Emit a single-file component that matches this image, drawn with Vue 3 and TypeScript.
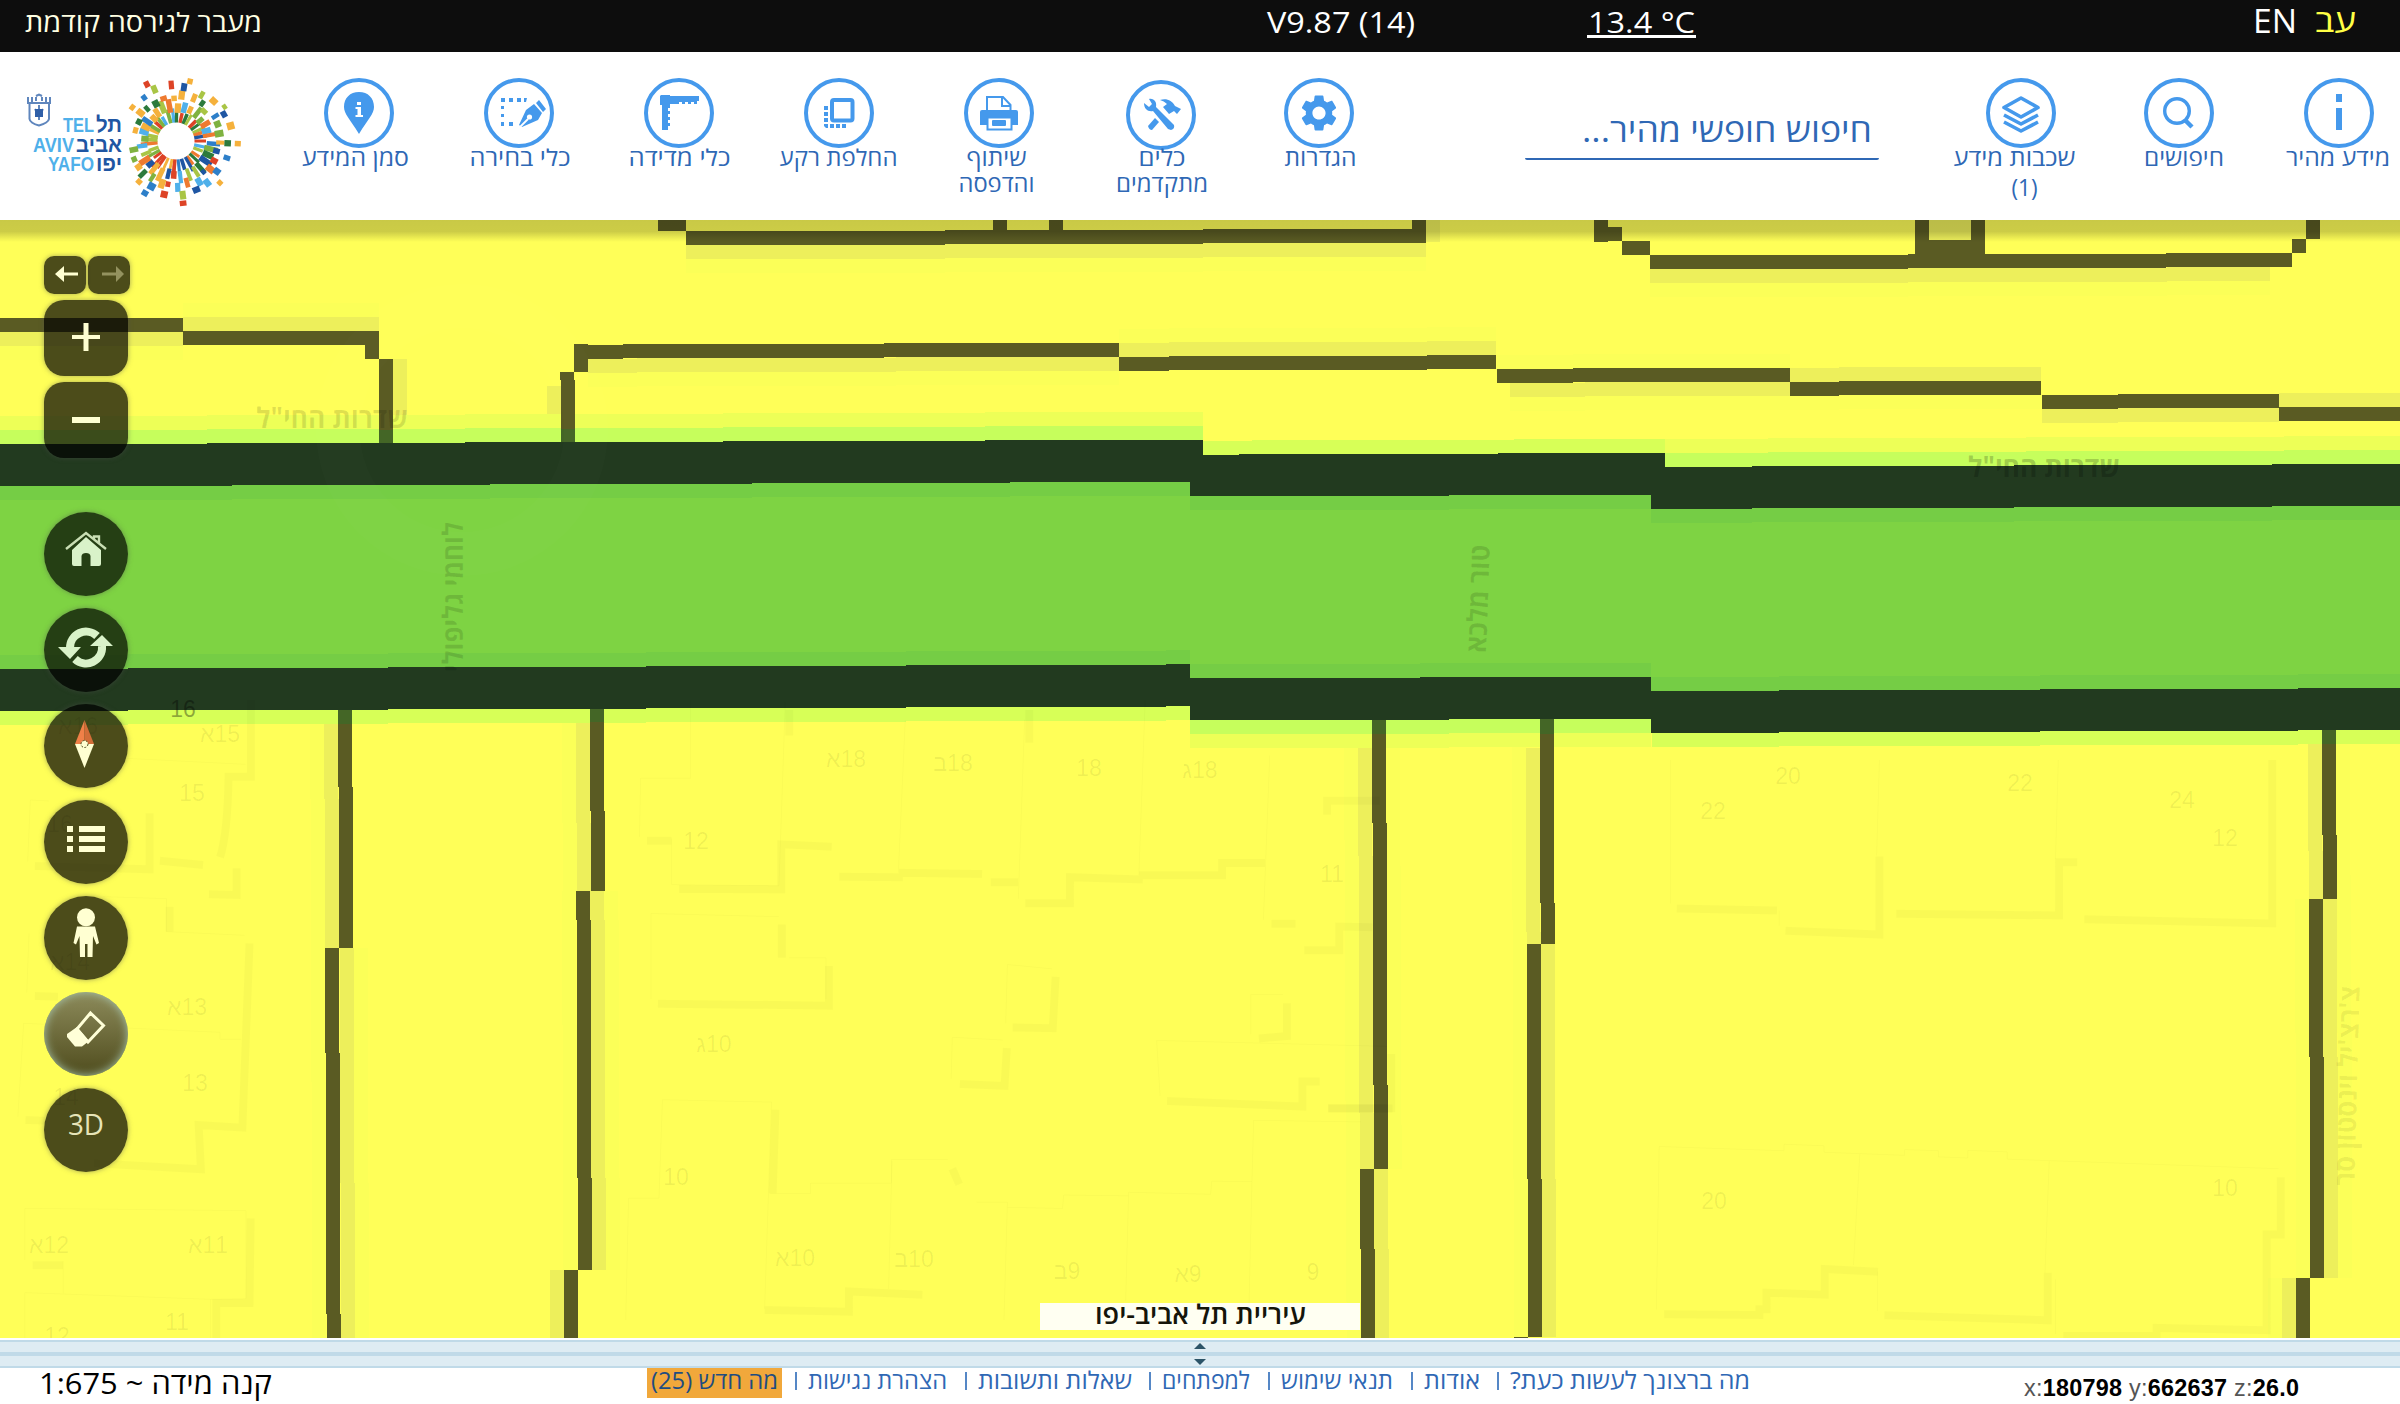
<script setup lang="ts">
import { defineComponent, h } from 'vue'

type Label = { t: string; x: number; w: number }
type Tool = { icon: string; dy?: number; lines: Label[] }

/* A single line of text condensed to a fixed width, like the site's narrow display face. */
const Fit = defineComponent({
  props: {
    t: { type: String, required: true },
    w: { type: Number, required: true },
    s: { type: Number, default: 22 },
    b: { type: Number, default: 0 },
  },
  setup(p) {
    return () =>
      h('svg', { width: p.w, height: p.b + 8, class: 'fit', overflow: 'visible', style: { display: 'block' } }, [
        h(
          'text',
          {
            x: p.w / 2,
            y: p.b,
            'text-anchor': 'middle',
            'font-size': p.s,
            textLength: p.w,
            lengthAdjust: 'spacingAndGlyphs',
            fill: 'currentColor',
            direction: /[\u0590-\u05ff]/.test(p.t) ? 'rtl' : 'ltr',
          },
          p.t,
        ),
      ])
  },
})

const tools: Tool[] = [
  { icon: 'pin', lines: [{ t: 'סמן המידע', x: 76.5, w: 107 }] },
  { icon: 'select', lines: [{ t: 'כלי בחירה', x: 81, w: 101 }] },
  { icon: 'ruler', lines: [{ t: 'כלי מדידה', x: 80.5, w: 102 }] },
  { icon: 'swap', lines: [{ t: 'החלפת רקע', x: 79.5, w: 118 }] },
  { icon: 'print', lines: [{ t: 'שיתוף', x: 77.5, w: 60 }, { t: 'והדפסה', x: 77.5, w: 76 }] },
  { icon: 'build', dy: 2, lines: [{ t: 'כלים', x: 83, w: 47 }, { t: 'מתקדמים', x: 83, w: 92 }] },
  { icon: 'gear', lines: [{ t: 'הגדרות', x: 81.5, w: 72 }] },
]
const infoTools: Tool[] = [
  { icon: 'layers', lines: [{ t: 'שכבות מידע', x: 72.5, w: 122 }, { t: '(1)', x: 82.5, w: 26 }] },
  { icon: 'search', lines: [{ t: 'חיפושים', x: 84, w: 80 }] },
  { icon: 'info', lines: [{ t: 'מידע מהיר', x: 79, w: 104 }] },
]

const links = [
  { t: 'הצהרת נגישות', w: 139 },
  { t: 'שאלות ותשובות', w: 154 },
  { t: 'למפתחים', w: 88 },
  { t: 'תנאי שימוש', w: 112 },
  { t: 'אודות', w: 56 },
  { t: 'מה ברצונך לעשות כעת?', w: 240 },
]

/* The raster overlay is turned a fraction of a degree: one pixel every SLOPE pixels. */
const SLOPE = 259.5
const hbar = (x1: number, x2: number, y: number, t = 14) => {
  const d = (x2 - x1) / SLOPE
  return `M${x1} ${y}L${x2} ${y - d}V${y - d + t}L${x1} ${y + t}Z`
}
const vbar = (x: number, y1: number, y2: number, t = 14) => {
  const d = (y2 - y1) / SLOPE
  return `M${x} ${y1}H${x + t}L${x + t + d} ${y2}H${x + d}Z`
}
const box = (x1: number, y1: number, x2: number, y2: number) => `M${x1} ${y1}H${x2}V${y2}H${x1}Z`

const roads = [
  hbar(0, 183, 318.4), hbar(183, 379, 331.5), box(365, 345, 379, 359), box(379, 359, 393, 446),
  box(574, 344, 588, 372), hbar(574, 1119, 344.7), box(560, 372, 574, 380), box(561, 380, 575, 446),
  hbar(1119, 1496, 356.7), hbar(1497, 1790, 368.8), hbar(1790, 2041, 381.7), hbar(2042, 2279, 394.8), hbar(2279, 2400, 407.4),
  box(658, 218, 686, 231), hbar(686, 1426, 231.5), box(1412, 218, 1426, 242), box(993, 218, 1007, 232), box(1049, 218, 1063, 232),
  box(1594, 218, 1608, 242), box(1608, 227, 1622, 241), box(1622, 241, 1650, 255), hbar(1650, 2292, 255.5),
  box(1915, 218, 1929, 256), box(1971, 218, 1985, 256), box(1929, 240, 1971, 256),
  box(2292, 239, 2306, 253), box(2306, 218, 2320, 239),
  vbar(338.2, 706, 948), vbar(325.1, 948, 1340), vbar(590.1, 704, 891), vbar(576.4, 891, 1270), vbar(564.2, 1270, 1340),
  vbar(1372.1, 718, 1169), vbar(1360.2, 1169, 1340), vbar(1539.8, 718, 944), vbar(1526.6, 944, 1337), box(1514, 1337, 1528, 1340),
  vbar(2322.1, 728, 899), vbar(2308.9, 899, 1278), vbar(2296, 1278, 1340),
].join('')

const roadHalos = [
  hbar(0, 183, 332.4), hbar(183, 379, 317.5), box(393, 359, 407, 432), box(547, 386, 561, 432), hbar(588, 1119, 358.7),
  hbar(1119, 1496, 342.7), hbar(1510, 1790, 382.8), hbar(1790, 2041, 367.7), hbar(2042, 2279, 408.8), hbar(2279, 2400, 393.4),
  hbar(686, 1426, 245.5), box(1426, 218, 1440, 242), hbar(1650, 2270, 269.5), box(1929, 218, 1971, 240),
  vbar(324.2, 720, 948), vbar(339.6, 948, 1340), vbar(576.1, 718, 891), vbar(590.4, 891, 1270), vbar(550.2, 1270, 1340),
  vbar(1358.1, 748, 1169), vbar(1374.2, 1169, 1340), vbar(1525.8, 748, 944), vbar(1540.6, 944, 1337),
  vbar(2308.1, 744, 899), vbar(2322.9, 899, 1278), vbar(2282, 1278, 1340),
].join('')
const softHalos = [
  hbar(0, 183, 346.4), hbar(183, 379, 303.5), hbar(588, 1119, 372.7), hbar(1119, 1496, 328.7), hbar(1510, 1790, 396.8),
  hbar(1790, 2041, 395.7), hbar(686, 1426, 259.5), hbar(1650, 2270, 283.5), hbar(1497, 1790, 354.8),
  vbar(310.2, 720, 948), vbar(353.6, 948, 1340), vbar(311, 948, 1340), vbar(562.1, 718, 891), vbar(604.4, 891, 1270), vbar(562, 891, 1270),
  vbar(1344.1, 734, 1169), vbar(1386, 734, 1169), vbar(1346, 1169, 1340), vbar(1511.8, 734, 944), vbar(1512.6, 944, 1337),
  vbar(2336, 744, 899), vbar(2295, 899, 1278), vbar(2337, 899, 1278), vbar(2268, 1278, 1340),
].join('')

/* Park strip: top and bottom dark borders in three stepped segments. */
const seg = (x1: number, x2: number, y1: number, y2: number) => hbar(x1, x2, y1, y2 - y1)
const parkFill = [seg(0, 1190, 470, 690), seg(1190, 1651, 480, 700), seg(1651, 2400, 492, 712)].join('')
const parkDark = [
  seg(0, 1203, 444.3, 486.4), seg(1190, 1665, 454.7, 496.5), seg(1651, 2400, 466.9, 508.9),
  seg(0, 1190, 669, 711), seg(1190, 1651, 678.4, 720.5), seg(1651, 2400, 691, 733),
].join('')
const parkInner = [
  seg(0, 1190, 486.4, 500.4), seg(1190, 1651, 496.5, 510.5), seg(1651, 2400, 508.9, 522.9),
  seg(0, 1190, 655, 669), seg(1190, 1651, 664.4, 678.4), seg(1651, 2400, 677, 691),
].join('')
const lime = [seg(0, 1203, 430.3, 444.3), seg(1665, 2400, 452.9, 466.9), seg(1190, 1651, 720.5, 734.5)].join('')
const limeMid = [seg(1203, 1665, 440.7, 454.7), seg(0, 1190, 711, 725), seg(1652, 2400, 733, 747)].join('')
const limeSoft = [seg(0, 1203, 416.3, 430.3), seg(1665, 2400, 438.9, 452.9), seg(1190, 1651, 734.5, 748.5)].join('')

const houses: [string, number, number][] = [
  ['15א', 220, 742], ['15', 192, 801], ['13א', 187, 1015], ['13', 195, 1091], ['16א', 78, 734], ['16', 60, 832],
  ['14א', 70, 970], ['14', 66, 1105], ['12א', 49, 1253], ['11א', 208, 1253], ['11', 177, 1330], ['12', 57, 1344],
  ['12', 696, 849], ['18א', 846, 767], ['18ב', 953, 771], ['18', 1089, 776], ['18ג', 1200, 778], ['11', 1332, 882],
  ['10ג', 714, 1052], ['10', 676, 1185], ['10א', 795, 1266], ['10ב', 914, 1267], ['9ב', 1067, 1279], ['9א', 1188, 1282], ['9', 1313, 1280],
  ['20', 1788, 784], ['22', 2020, 791], ['22', 1713, 819], ['24', 2182, 808], ['12', 2225, 846], ['20', 1714, 1209], ['10', 2225, 1196],
]
const houseLabel = (s: string) => (/[א-ת]$/.test(s) ? '\u202d' + s.slice(-1) + s.slice(0, -1) + '\u202c' : s)

/* Confetti burst of the city emblem. */
const palette = ['#1f56a3', '#2d7fc9', '#4fb0ea', '#2c7a3c', '#7fb241', '#a9c545', '#f5b13c', '#ee7a30', '#dd4326', '#f5b13c']
let seedValue = 11
const rnd = () => {
  seedValue = (seedValue * 16807) % 2147483647
  return seedValue / 2147483647
}
const confetti: { a: number; r: number; l: number; w: number; c: string }[] = []
const ring = (n: number, r: number, dr: number, l: number, dl: number, w: number, dw: number) => {
  for (let i = 0; i < n; i++) {
    const p = { a: (i * 360) / n + rnd() * 5, r: r + rnd() * dr, l: l + rnd() * dl, w: w + rnd() * dw, c: palette[Math.floor(rnd() * 10)] }
    /* the wordmark sits to the left, so nothing may fly past it */
    if (Math.cos((p.a * Math.PI) / 180) * (p.r + p.l) < -50) continue
    confetti.push(p)
  }
}
ring(36, 18.5, 0, 9, 8, 2.8, 1)
ring(32, 27, 4, 7, 7, 3.8, 2.5)
ring(30, 38, 5, 5, 5, 4, 3)
ring(22, 47, 6, 5, 4, 4.5, 3.5)
ring(9, 57, 4, 4, 3, 4.5, 2.5)
</script>

<template>
  <div class="page">
    <div class="topbar">
      <Fit class="prev" t="מעבר לגירסה קודמת" :w="237" :s="26" :b="31.5" />
      <Fit class="ver" t="V9.87 (14)" :w="148" :s="29.5" :b="33" />
      <span class="temp"><Fit t="13.4 °C" :w="107" :s="29.5" :b="33" /></span>
      <Fit class="en" t="EN" :w="44" :s="33" :b="33" />
      <Fit class="he" t="עב" :w="41" :s="32" :b="31.5" />
    </div>

    <header class="header">
      <svg class="logo" width="279" height="168" viewBox="0 52 279 168">
        <g fill="none" stroke="#5f86bd" stroke-width="2">
          <path d="M28 97V103H50V97M32 97V102M36 97V101M42 97V101M46 97V102M36 96L39 94.500 42 96" />
          <path d="M29.500 104V119Q30 123 39 125.500Q48 123 49 119V104" />
          <path d="M39 105V120M35 109L39 116 43 109M35 115H43" />
        </g>
        <path d="M35 109H43V117H35Z" fill="#2f5fa8" />
        <g transform="translate(176 141)">
          <rect v-for="(p, i) in confetti" :key="i" :x="p.r" :y="-p.w / 2" :width="p.l" :height="p.w" :fill="p.c" :transform="`rotate(${p.a})`" />
        </g>
        <g class="logo-text">
          <text x="63" y="131.500" textLength="31" lengthAdjust="spacingAndGlyphs">TEL</text>
          <text x="33" y="151.500" textLength="41" lengthAdjust="spacingAndGlyphs">AVIV</text>
          <text x="48" y="171" textLength="46" lengthAdjust="spacingAndGlyphs">YAFO</text>
        </g>
        <g class="logo-text he-logo">
          <text x="96" y="131.500" textLength="26" lengthAdjust="spacingAndGlyphs">תל</text>
          <text x="76" y="151.500" textLength="46" lengthAdjust="spacingAndGlyphs">אביב</text>
          <text x="96" y="171" textLength="26" lengthAdjust="spacingAndGlyphs">יפו</text>
        </g>
      </svg>

      <template v-for="(group, g) in [tools, infoTools]" :key="g">
        <div v-if="g === 1" class="search">
          <div class="field"><Fit t="חיפוש חופשי מהיר..." :w="290" :s="32.5" :b="39.5" /></div>
        </div>
        <nav :class="g ? 'group info-group' : 'group'">
          <div v-for="tool in group" :key="tool.icon" class="tool">
            <svg class="ring" :class="{ low: tool.dy }" width="70" height="70" viewBox="0 0 70 70">
              <circle cx="35" cy="35" r="33" fill="#fff" stroke="#4599ec" stroke-width="4" />
              <g v-if="tool.icon === 'pin'">
                <path d="M35 14C26 14 20 20 20 29C20 36 26 41 35 56C44 41 50 36 50 29C50 20 44 14 35 14Z" fill="#4599ec" />
                <path d="M33 24H37V27H33ZM31.500 29H37V37H39V39H31.500V37H33.500V31H31.500Z" fill="#fff" />
              </g>
              <g v-else-if="tool.icon === 'select'" fill="#4599ec">
                <path d="M17 20H21V24H17ZM25 20H29V24H25ZM33 20H37V24H33ZM40 20H43L42 24H40ZM17 28H20V31H17ZM17 36H20V39H17ZM17 44H20V48H17ZM25 44H29V48H25Z" />
                <path d="M52 25L55 22L62 31L59 34ZM50 26L58 35L54 42L38 49L35 47L42 32Z" />
                <path d="M36 49L44 41" stroke="#fff" stroke-width="1.800" /><circle cx="45.500" cy="39" r="2.600" fill="#fff" />
              </g>
              <g v-else-if="tool.icon === 'ruler'" fill="#4599ec">
                <path d="M17 17H26V18H55V23H53V26H50V24H47V26H44V24H41V26H38V24H35V26H26V30H24V33H26V36H24V39H26V42H24V45H26V48H24V52H18V27H16V18Z" />
              </g>
              <g v-else-if="tool.icon === 'swap'" fill="#4599ec">
                <rect x="28" y="22" width="20.500" height="20.500" rx="2" fill="none" stroke="#4599ec" stroke-width="4" />
                <path d="M20 28H24V32H20ZM20 34H24V38H20ZM20 40H24V44H20ZM20 46H24V50H22L20 48ZM26 46H30V50H26ZM32 46H36V50H32ZM38 46H42V50H38Z" />
              </g>
              <g v-else-if="tool.icon === 'print'" fill="#4599ec">
                <path d="M23 33V19H39L46.500 27V33" fill="#fff" stroke="#4599ec" stroke-width="2" /><path d="M38 19V28H47" fill="none" stroke="#4599ec" stroke-width="2" />
                <path d="M18 32H52Q54 32 54 34V47H16V34Q16 32 18 32Z" /><rect x="23.500" y="39.500" width="24" height="12" fill="#fff" stroke="#4599ec" stroke-width="2" />
                <path d="M16 34H54V42H49V38H22V42H16Z" /><rect x="28" y="42" width="14" height="6" rx="1" />
              </g>
              <g v-else-if="tool.icon === 'build'" fill="#4599ec">
                <path d="M18 23L23 27L26 24L23 19C28 18 31 22 30 27L48 45Q49 49 45 50L42 49L27 31C22 32 18 29 18 23Z" />
                <path d="M34 20C40 18 46 20 49 26L53 28L55 29L51 34L48 31L43 34L37 27L41 24Q38 21 34 20Z" />
                <path d="M29 38L33 42L26 50Q23 50 22 46Z" />
              </g>
              <path v-else-if="tool.icon === 'gear'" fill="#4599ec" transform="translate(13 13) scale(1.833)" d="M19.140 12.940c.04-.3.060-.61.060-.94 0-.32-.02-.64-.07-.94l2.030-1.580c.18-.14.23-.41.120-.61l-1.920-3.320c-.12-.22-.37-.29-.59-.22l-2.390.96c-.5-.38-1.030-.7-1.620-.94l-.36-2.540c-.04-.24-.24-.41-.48-.41h-3.840c-.24 0-.43.17-.47.41l-.36 2.540c-.59.24-1.130.57-1.620.94l-2.390-.96c-.22-.08-.47 0-.59.22L2.740 8.870c-.12.21-.08.470.120.610l2.030 1.580c-.05.3-.09.630-.09.940s.020.640.070.940l-2.030 1.580c-.18.140-.23.410-.12.610l1.920 3.320c.12.220.370.290.590.220l2.390-.96c.5.380 1.030.7 1.620.940l.36 2.540c.05.240.240.410.480.410h3.840c.24 0 .44-.17.470-.41l.36-2.540c.59-.24 1.130-.56 1.620-.94l2.390.96c.22.080.470 0 .59-.22l1.920-3.320c.12-.22.070-.47-.12-.61l-2.010-1.580zM12 15.600c-1.980 0-3.600-1.620-3.600-3.600s1.620-3.600 3.600-3.600 3.600 1.620 3.600 3.600-1.620 3.600-3.600 3.600z" />
              <g v-else-if="tool.icon === 'layers'" fill="none" stroke="#4599ec" stroke-width="3.600" stroke-linejoin="round">
                <path d="M35 20L52 29.500L35 39L18 29.500ZM18 37L35 46L52 37M18 44L35 53L52 44" />
              </g>
              <g v-else-if="tool.icon === 'search'" fill="none" stroke="#4599ec" stroke-width="3.400">
                <circle cx="33" cy="33" r="12.300" /><path d="M41 42L48 49" stroke-width="4.500" />
              </g>
              <path v-else d="M32 16H38V24H32ZM32 30H38V52H32Z" fill="#4599ec" />
            </svg>
            <svg class="labels" width="160" height="56">
              <text
                v-for="(l, i) in tool.lines"
                :key="l.t"
                :x="l.x"
                :y="17.5 + i * (l.t === '(1)' ? 30 : 26)"
                :textLength="l.w"
                lengthAdjust="spacingAndGlyphs"
                text-anchor="middle"
                direction="rtl"
              >{{ l.t }}</text>
            </svg>
          </div>
        </nav>
      </template>
    </header>

    <main class="map">
      <svg class="canvas" width="2400" height="1118" viewBox="0 220 2400 1118">
        <g shape-rendering="crispEdges">
          <path :d="softHalos" fill="#fbff58" />
          <path :d="roadHalos" fill="#edef5b" />
          <path :d="limeSoft" fill="#edff57" />
          <path :d="limeMid" fill="#d7ff57" />
          <path :d="lime" fill="#c6fe5c" />
          <path :d="roads" fill="#5a5b23" />
          <path d="M379 430H393V446H379ZM561 429H575V446H561ZM338 708H352V724H338ZM590 706H604V722H590ZM1372 718H1386V734H1372ZM1540 718H1554V734H1540ZM2322 728H2336V744H2322Z" fill="#446626" />
          <path :d="parkFill" fill="#7ed343" />
          <path :d="parkInner" fill="#75cd45" />
          <path :d="parkDark" fill="#223a1f" />
        </g>
        <circle cx="462" cy="430" r="124" fill="none" stroke="#fff" stroke-opacity=".012" stroke-width="44" />
        <g class="shade">
          <path transform="translate(500 700) scale(.574 .3954)" d="M256 356H299M312 478L490 479V365L578 371M591 447L702 448M695 437L840 440M855 461H903M915 514H993V448L1120 454M1113 443H1258V412H1333M1344 566H1386M1401 633H1462V573L1520 575M275 768L573 773V673M491 568V652M893 828L963 830L968 700M801 971L879 976L883 880M1322 856L1371 850V767M1162 1014L1398 1028V965H1428M1443 1033H1555M1441 290V255H1533M480 1036L475 1248M461 1543L608 1547V1496L736 1504M788 1185L800 1225M504 25V90M922 25V108" />
          <path transform="translate(1300 760) scale(.7015 .3827)" d="M537 388L680 393M692 446L826 456V252M850 402L1082 406V267H1108M1118 416L1386 427V0M519 1448L655 1450V1435H665V1392L748 1397V1330L824 1337M833 1451L1066 1464V1340M1088 1505H1221V1484L1378 1490V1240H1398V1090M40 910H130V768" />
          <path transform="translate(0 700) scale(.4464 .3333)" d="M78 498L335 508V340M493 472Q510 400 512 230H562V0M468 583L530 585V505M358 482L455 495M380 620V695M559 730L543 1283L445 1275L450 1408L210 1390M78 888L130 890M57 1260L100 1262" />
          <path transform="translate(0 1180) scale(.3827 .3333)" d="M85 256H165M655 115L652 369H565V474" />
        </g>
        <g class="outline">
          <path transform="translate(500 700) scale(.574 .3954)" d="M332 0V198H245L243 347M299 350V467L486 470L497 5M694 437L706 50M903 503L914 50M1113 443L1124 0M1330 556L1341 140M263 757V540L486 548M503 652H568V757M881 818L884 669L962 680M786 958L788 853L876 860M1308 846V745H1364M1150 1002L1144 861L1545 876M219 1568L224 1260H277L283 1011L473 1017L461 1540M470 1248H541V1222H682V1162H780M677 1490L683 1165M830 1270H884L878 1568M884 1283L980 1286L982 1252L1095 1254V1245L1238 1250L1240 1217L1310 1218L1313 1063L1500 1067M1095 1254L1090 1520M1310 1218L1305 1525" />
          <path transform="translate(1300 760) scale(.7015 .3827)" d="M528 375V0M683 433V393M822 250L826 0M1077 258L1081 0M508 1436L512 1010L690 1021V1004L747 1008V1025L862 1033V1018L910 1021V1037L952 1040V1020L1008 1024V1043L1395 1068M798 1030L789 1320M1068 1048L1062 1340M823 1440V1337M1077 1500V1357" />
          <path transform="translate(0 700) scale(.4464 .3333)" d="M62 485L68 300L110 303M60 878L65 700M230 590L373 596V695L548 706M40 1250L53 970L493 997V1018H540M280 175L550 193" />
          <path transform="translate(0 1180) scale(.3827 .3333)" d="M65 240V85L643 92V356L550 358V474M165 243V340M65 474V338L550 358" />
        </g>
        <g class="house">
          <text v-for="(n, i) in houses" :key="i" :x="n[1]" :y="n[2]">{{ houseLabel(n[0]) }}</text>
          <text x="183" y="717" fill-opacity=".35">16</text>
        </g>
        <g class="street">
          <text x="332" y="428" textLength="152" lengthAdjust="spacingAndGlyphs">שדרות החי"ל</text>
          <text x="2044" y="477" textLength="152" lengthAdjust="spacingAndGlyphs" fill-opacity=".2">שדרות החי"ל</text>
          <text transform="translate(463 597) rotate(-90)" textLength="150" lengthAdjust="spacingAndGlyphs">לוחמי גליפולי</text>
          <text transform="translate(1488 599) rotate(-88)" textLength="108" lengthAdjust="spacingAndGlyphs">טור מלכא</text>
          <text class="pale" transform="translate(2357 1086) rotate(-88.500)" textLength="200" lengthAdjust="spacingAndGlyphs">צ'רצ'יל וינסטון סר</text>
        </g>
      </svg>
      <div class="edge"></div>

      <div class="controls">
        <div class="history">
          <button class="btn small"><svg width="42" height="38"><path d="M11 18L20 10V16.500H34V19.500H20V26Z" fill="#ffffd2" /></svg></button>
          <button class="btn small"><svg width="42" height="38"><path d="M36 18L28 10V16.500H14V19.500H28V26Z" fill="#93925f" /></svg></button>
        </div>
        <button class="btn zoom"><svg width="84" height="76"><path d="M28 35H39.500V23H44.500V35H56V39H44.500V51H39.500V39H28Z" fill="#ffffd2" /></svg></button>
        <button class="btn zoom"><svg width="84" height="76"><path d="M28 35H56V41H28Z" fill="#ffffd2" /></svg></button>
        <div class="rounds">
          <button class="btn round"><svg width="84" height="84">
            <path d="M22 37L42 21L62 37M50 27V24.500H55V31" fill="none" stroke="#c9deb4" stroke-width="2.400" /><path d="M42 25L57 38V52Q57 54 55 54H46.500V44Q46 41 42 41Q38 41 37.500 44V54H30Q28 54 28 52V38Z" fill="#d9f2c9" />
          </svg></button>
          <button class="btn round"><svg width="84" height="84">
            <g fill="none" stroke="#d9f2c9" stroke-width="8"><path d="M26 40A16 16 0 0 1 53 28" /><path d="M58 38A16 16 0 0 1 31 51" /></g>
            <path d="M14 39H37L26 51ZM46 38H69L58 27Z" fill="#d9f2c9" />
          </svg></button>
          <button class="btn round"><svg width="84" height="84">
            <path d="M40.500 16L31 40H40.500Z" fill="#f08048" /><path d="M40.500 16L50 40H40.500Z" fill="#d26d38" /><path d="M31 40H50L40.500 64Z" fill="#ffffd2" /><circle cx="40.500" cy="40" r="3.500" fill="#ffffd2" stroke="#4c4a1a" stroke-dasharray="2 1.500" />
          </svg></button>
          <button class="btn round"><svg width="84" height="84"><path d="M23 26H29V32H23ZM35 26H61V32H35ZM23 36H29V42H23ZM35 36H61V42H35ZM23 46H29V52H23ZM35 46H61V52H35Z" fill="#ffffd2" /></svg></button>
          <button class="btn round"><svg width="84" height="84">
            <circle cx="42" cy="21.300" r="9" fill="#ffffd2" /><path d="M33 30.500H51L55 47L52.500 48.500L49 40L48.500 61H43.500V48H41V61H36L35.500 40L32 48.500L29.500 47Z" fill="#ffffd2" />
          </svg></button>
          <button class="btn round off"><svg width="84" height="84">
            <path d="M46.500 21L59.500 33.500L44 50L33 37Z" fill="none" stroke="#ffffd8" stroke-width="3" /><path d="M33 35L45 49L38 54.500H31L23 45V42Z" fill="#ffffd8" />
          </svg></button>
          <button class="btn round"><svg width="84" height="84"><text x="42" y="47" text-anchor="middle" font-size="29" textLength="36" lengthAdjust="spacingAndGlyphs" fill="#e6e4b8">3D</text></svg></button>
        </div>
      </div>

      <div class="credit"><Fit t="עיריית תל אביב-יפו" :w="211" :s="27" :b="21" /></div>
    </main>

    <div class="splitter">
      <div class="strip"><svg width="12" height="6"><path d="M6 0L12 6H0Z" fill="#2c5468" /></svg></div>
      <div class="strip second"><svg width="12" height="6"><path d="M0 0H12L6 6Z" fill="#2c5468" /></svg></div>
    </div>

    <footer class="footer">
      <Fit class="scale" t="קנה מידה ~ 1:675" :w="233" :s="29.5" :b="25.5" />
      <div class="new"><Fit t="מה חדש (25)" :w="127" :s="24" :b="20.5" /></div>
      <div class="links">
        <template v-for="l in links" :key="l.t">
          <i class="bar"></i><Fit class="link" :t="l.t" :w="l.w" :s="24" :b="20.5" />
        </template>
      </div>
      <div class="coords">x:<b>180798</b> y:<b>662637</b> z:<b>26.0</b></div>
    </footer>
  </div>
</template>

<style>
body { margin: 0; }
</style>

<style scoped>
.page { width: 2400px; height: 1404px; display: flex; flex-direction: column; overflow: hidden; background: #fff; font-family: "Open Sans", "Liberation Sans", sans-serif; }
.topbar { height: 52px; background: #0d0d0d; color: #fff; display: flex; flex: none; }
.prev { margin-left: 25px; color: #ffffe2; }
.ver { margin-left: 1005px; }
.temp { margin-left: 172px; width: 109px; height: 38px; box-sizing: border-box; border-bottom: 3px solid #fff; padding-left: 1px; }
.en { margin-left: 557px; }
.he { margin-left: 18px; color: #ffff45; }

.header { height: 168px; display: flex; flex: none; background: #fff; }
.logo-text { font: 700 20.500px "Liberation Sans", sans-serif; fill: #4fb0ea; }
.he-logo { font-size: 22px; fill: #1f56a3; }
.group { display: grid; grid-template-columns: repeat(7, 160px); }
.info-group { grid-template-columns: 158px 159px 141px; }
.tool { display: flex; flex-direction: column; padding-top: 26px; }
.ring { margin-left: 45px; flex: none; position: relative; }
.info-group .ring { margin-left: 44px; }
.info-group .tool:last-child .ring { margin-left: 45px; }
.low { top: 2px; left: 2px; }
.labels { overflow: visible; font-size: 23px; fill: #2f68b5; position: relative; }
.search { width: 543px; }
.field { margin: 50px 0 0 126px; width: 354px; height: 58px; box-sizing: border-box; border-bottom: 2px solid #2f68b5; color: #2f68b5; padding-left: 57px; border-radius: 2px; }

.map { height: 1118px; flex: none; position: relative; background: #ffff58; overflow: hidden; }
.canvas { display: block; }
.edge { position: absolute; inset: 0 0 auto 0; height: 22px; background: linear-gradient(rgba(0, 0, 0, .21), rgba(0, 0, 0, .2) 52%, rgba(0, 0, 0, .07) 82%, rgba(0, 0, 0, 0)); }
.shade path { fill: none; stroke: #000; stroke-opacity: .023; stroke-width: 8px; vector-effect: non-scaling-stroke; }
.outline path { fill: none; stroke: #000; stroke-opacity: .02; stroke-width: 1px; vector-effect: non-scaling-stroke; }
.house { font: 23px "Liberation Sans", sans-serif; text-anchor: middle; fill-opacity: .065; }
.street { font: 700 28px "Open Sans", "Liberation Sans", sans-serif; fill: #000; fill-opacity: .12; text-anchor: middle; }
.pale { fill-opacity: .07; }

.controls { position: absolute; left: 44px; top: 36px; width: 86px; display: flex; flex-direction: column; gap: 6px; }
.history { display: flex; gap: 2px; }
.btn { border: 0; padding: 0; display: block; background: rgba(0, 0, 0, .7); box-shadow: 0 0 5px rgba(80, 80, 80, .5); font-family: inherit; }
.btn svg { display: block; }
.small { width: 42px; height: 38px; border-radius: 10px; }
.zoom { width: 84px; height: 76px; border-radius: 20px; }
.rounds { margin-top: 48px; display: flex; flex-direction: column; gap: 12px; }
.round { width: 84px; height: 84px; border-radius: 50%; }
.off { background: linear-gradient(#8d8b5b, #4f4c1d); box-shadow: inset 0 0 10px #a9c8b0; }
.credit { position: absolute; left: 1040px; top: 1083px; width: 320px; height: 27px; box-sizing: border-box; background: rgba(255, 255, 255, .92); color: #15150a; font-weight: 600; padding-left: 55px; }

.splitter { height: 30px; box-sizing: border-box; flex: none; padding-top: 2px; background: #fff; }
.strip { height: 14px; box-sizing: border-box; border: 2px solid #c0dae8; border-width: 2px 0; background: #deecf3; display: flex; justify-content: center; padding-top: 1px; }
.second { padding-top: 3px; }

.footer { height: 36px; display: flex; flex: none; color: #2f68b5; }
.scale { margin-left: 39px; color: #000; flex: none; }
.new { margin-left: 375px; width: 135px; height: 30px; box-sizing: border-box; background: #f1a83b; color: #1f4d80; padding-left: 4px; flex: none; }
.links { display: flex; width: 968px; flex: none; }
.link { flex: none; }
.bar { flex: none; width: 2px; height: 18px; margin: 4px 11px 0 17.700px; background: #5587c6; }
.bar:first-child { margin-left: 13px; }
.coords { margin-left: 274px; padding-top: 6px; font: 23.400px/28px "Liberation Sans", sans-serif; letter-spacing: .25px; color: #555; white-space: nowrap; }
.coords b { color: #000; }
</style>
